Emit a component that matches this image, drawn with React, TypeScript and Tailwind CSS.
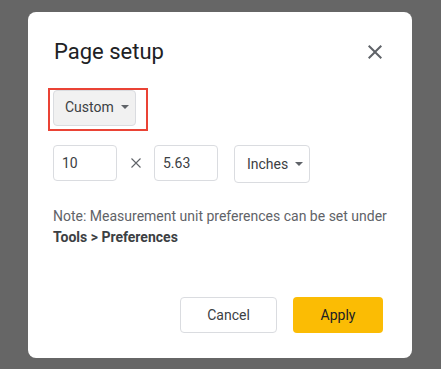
import React from "react";

const Caret = () => (
  <svg width="8" height="4" viewBox="0 0 8 4" className="shrink-0">
    <path d="M0 0L4 4L8 0Z" fill="#5f6368" />
  </svg>
);

export default function App() {
  return (
    <div
      className="w-[441px] h-[369px] bg-[#666666] pt-[12px] pl-[28px]"
      style={{ fontFamily: "Roboto, 'Liberation Sans', sans-serif" }}
    >
      <div className="w-[384px] h-[346px] bg-white rounded-[8px] flex flex-col pl-[25px] pr-[25px] pt-[26px] pb-[25px]">
        <div className="flex items-center justify-between">
          <div className="text-[22px] leading-[28px] text-[#202124] pl-[1px]">Page setup</div>
          <svg width="24" height="24" viewBox="0 0 24 24" className="-mt-[1px]">
            <path
              d="M19 6.41L17.59 5 12 10.59 6.41 5 5 6.41 10.59 12 5 17.59 6.41 19 12 13.41 17.59 19 19 17.59 13.41 12z"
              fill="#5f6368"
            />
          </svg>
        </div>

        <div className="mt-[24px] flex">
          <div className="relative">
            <div className="w-[83px] h-[36px] bg-[#f1f1f1] border border-[#dadce0] rounded-[4px] flex items-center pl-[11px] gap-[7px] pb-[2px] text-[14px] text-[#3c4043]">
              <span>Custom</span>
              <Caret />
            </div>
            <div className="absolute left-[-5px] top-[-2px] w-[100px] h-[43px] border-2 border-[#ea4335]" />
          </div>
        </div>

        <div className="mt-[19px] flex items-start">
          <div className="w-[64px] h-[36px] border border-[#dadce0] rounded-[4px] flex items-center pl-[8px] text-[14px] text-[#3c4043]">
            10
          </div>
          <div className="w-[37px] h-[36px] flex items-center justify-center">
            <svg width="10" height="10" viewBox="0 0 10 10">
              <path d="M0.5 0.5L9.5 9.5M9.5 0.5L0.5 9.5" stroke="#5f6368" strokeWidth="1.1" />
            </svg>
          </div>
          <div className="w-[64px] h-[36px] border border-[#dadce0] rounded-[4px] flex items-center pl-[8px] text-[14px] text-[#3c4043]">
            5.63
          </div>
          <div className="ml-[16px] w-[76px] h-[38px] border border-[#dadce0] rounded-[4px] flex items-center pl-[12px] gap-[7px] text-[14px] text-[#3c4043]">
            <span>Inches</span>
            <Caret />
          </div>
        </div>

        <div className="mt-[23px] text-[14px] leading-[21px] text-[#5f6368]">
          <div>Note: Measurement unit preferences can be set under</div>
          <div className="font-bold text-[#3c4043]">Tools &gt; Preferences</div>
        </div>

        <div className="mt-auto flex justify-end gap-[16px] mr-[4px]">
          <div className="w-[97px] h-[36px] border border-[#dadce0] rounded-[4px] flex items-center justify-center text-[14px] text-[#3c4043]">
            Cancel
          </div>
          <div className="w-[90px] h-[36px] bg-[#fbbc04] rounded-[4px] flex items-center justify-center text-[14px] text-[#202124]">
            Apply
          </div>
        </div>
      </div>
    </div>
  );
}
